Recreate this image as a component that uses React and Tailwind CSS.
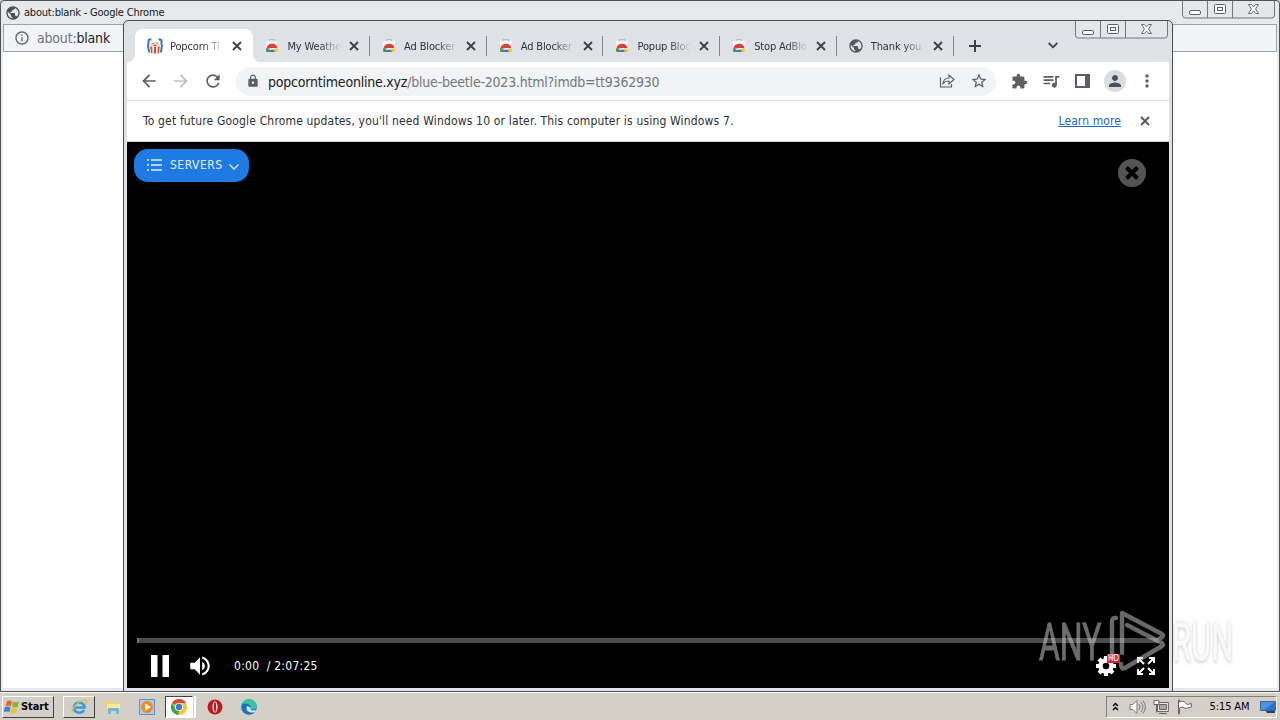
import React from 'react';
import {
  MdArrowBack, MdArrowForward, MdExtension, MdLock, MdMoreVert, MdOutlineInfo,
  MdPerson, MdPublic, MdQueueMusic, MdRefresh, MdStarBorder, MdVolumeUp
} from 'react-icons/md';

const tabs = [
  { title: 'My Weathe', icon: 'store' },
  { title: 'Ad Blocker', icon: 'store' },
  { title: 'Ad Blocker', icon: 'store' },
  { title: 'Popup Bloc', icon: 'store' },
  { title: 'Stop AdBlo', icon: 'store' },
  { title: 'Thank you', icon: 'globe' }
];

function StoreIcon() {
  return (
    <svg className="w-4 h-4 shrink-0" viewBox="0 0 16 16">
      <path d="M5.500 3V1.500h5V3" fill="none" stroke="#b4bec6" strokeWidth="1.200" />
      <path d="M2 3h12v11H2z" fill="#f3f4f5" />
      <path d="M2.500 11a5.600 5.600 0 0 1 11-1H8z" fill="#d9413b" />
      <path d="M2.600 9.800A6 6 0 0 0 2.300 14H7l-1-2z" fill="#3d9d57" />
      <path d="M10 10.500h3.800a6 6 0 0 1-.2 3.500H9z" fill="#f5c62d" />
      <path d="M5.500 14a2.600 2.600 0 0 1 5.200 0z" fill="#3f73d8" />
    </svg>
  );
}

function PopcornIcon() {
  return (
    <svg className="w-4 h-4 shrink-0" viewBox="0 0 16 16">
      <path d="M4.500 1.500H2.800q-1.300 0-1.300 2v2Q1.500 7 1 8q.5 1 .5 3 0 2.500 1.500 3M11.500 1.500h1.700q1.300 0 1.300 2v2q0 1.500.5 2.500-.5 1-.5 3 0 2.500-1.500 3" fill="none" stroke="#2f79bd" strokeWidth="2" />
      <path d="M3 7h10l-1 8.500H4z" fill="#fff" />
      <path d="M3.200 8.500h1.900l.5 7H4.200zM7 9h2v6.500H7zM10.900 8.500h1.900l-1 7h-1.400z" fill="#e5483c" />
      <path d="M3.500 7.700 4 4l2 1 2-1 2 1 2-2 .5 4.700L8 9z" fill="#f6d3b5" />
      <path d="M5.500 5.500h1.200M9.500 5h1.200M6.500 7.500h3" stroke="#c54535" strokeWidth="1" />
    </svg>
  );
}

function CloseIcon({ className }) {
  return (
    <svg className={className} width="10" height="10" viewBox="0 0 10 10" stroke="currentColor" strokeWidth="1.800">
      <path d="m1 1 8 8M9 1 1 9" />
    </svg>
  );
}

function WindowButtons({ className }) {
  return (
    <svg className={className} width="94" height="18" viewBox="0 0 94 18" fill="none">
      <path d="M.5 0v14q0 3 3 3h86q3 0 3-3V0M25.500 0v17M50.500 0v17" fill="#e4e7ea" stroke="#73777e" />
      <rect x="7.500" y="9.500" width="11" height="4" rx="1.500" fill="#fff" stroke="#5b6069" />
      <rect x="32.500" y="3.500" width="11" height="9" rx="1" fill="#fff" stroke="#5b6069" />
      <rect x="35.500" y="6.500" width="5" height="3" stroke="#5b6069" />
      <path d="M66.500 3.500h3l2 2.500 2-2.500h3L73.500 8l3 4.500h-3l-2-2.500-2 2.500h-3l3-4.500z" fill="#fff" stroke="#666b73" />
    </svg>
  );
}

function TabTitle({ children }) {
  return (
    <span className="ml-[7px] pt-[3px] w-[56px] shrink-0 whitespace-nowrap text-[11px] tracking-[-0.15px] text-[#303338] [mask-image:linear-gradient(to_right,black_58%,transparent_97%)]">{children}</span>
  );
}

function Tab({ title, icon }) {
  return (
    <div className="flex items-center w-[116.7px] h-[33px] pl-[12px]">
      {icon === 'store' ? <StoreIcon /> : <MdPublic className="w-4 h-4 shrink-0 text-[#55595e]" />}
      <TabTitle>{title}</TabTitle>
      <CloseIcon className="ml-[6px] shrink-0 text-[#3c4043]" />
      <span className="ml-auto -mr-px w-px h-5 shrink-0 bg-[#80848a]" />
    </div>
  );
}

function BackWindow() {
  return (
    <div className="absolute inset-0 flex flex-col border border-[#505256] rounded-t-[4px] bg-[#e7eaed] px-[2px] pb-[3px]">
      <div className="flex items-center h-[23px] pl-[2px]">
        <MdPublic className="w-4 h-4 text-[#4d5156]" />
        <span className="ml-[3px] pt-px text-[11px] tracking-[-0.2px] text-[#15171a]">about:blank - Google Chrome</span>
      </div>
      <WindowButtons className="absolute right-[3px] top-0" />
      <div className="flex items-center h-[28px] border border-[#9ea1a6] bg-[#f1f3f6] pl-[10px]">
        <MdOutlineInfo className="w-4 h-4 text-[#5f6368]" />
        <span className="ml-[7px] text-[14px] tracking-[-0.19px] text-[#707378]">about:<span className="text-[#202124]">blank</span></span>
      </div>
      <div className="flex-1 bg-white" />
    </div>
  );
}

function Toolbar() {
  return (
    <div className="flex items-center h-[39px] shrink-0 bg-white border-b border-[#d9dbde] text-[#5b5e62]">
      <MdArrowBack className="ml-[12px] w-5 h-5 shrink-0" />
      <MdArrowForward className="ml-[12px] w-5 h-5 shrink-0 text-[#bdbfc2]" />
      <MdRefresh className="ml-[12px] w-5 h-5 shrink-0" />
      <div className="flex items-center ml-[13px] w-[760px] shrink-0 h-[29px] rounded-full bg-[#f1f3f5] pl-[10px]">
        <MdLock className="w-[14px] h-[14px]" />
        <span className="ml-[8px] pt-[2px] text-[14px] tracking-[-0.21px] whitespace-nowrap text-[#74777b]"><span className="text-[#202124]">popcorntimeonline.xyz</span>/blue-beetle-2023.html?imdb=tt9362930</span>
        <svg className="ml-auto w-4 h-4" viewBox="0 0 16 16" fill="none" stroke="currentColor" strokeWidth="1.200">
          <path d="M1.500 4.500v9.500h11v-3M4 10.500C4.500 7 6.500 5 10 5V2l5 4.500-5 4.500V8C7.500 8 5.500 8.700 4 10.500z" />
        </svg>
        <MdStarBorder className="ml-[15px] mr-[8px] w-[18px] h-[18px]" />
      </div>
      <MdExtension className="ml-[15px] w-[17px] h-[17px] shrink-0" />
      <MdQueueMusic className="ml-[13px] w-5 h-5 shrink-0" />
      <svg className="ml-[14px] w-[15px] h-[14px] shrink-0" viewBox="0 0 15 14" fill="none" stroke="currentColor">
        <path d="M1 1h13v12H1z" strokeWidth="2" />
        <path d="M12 1v12" strokeWidth="4" />
      </svg>
      <span className="flex items-center justify-center ml-[14px] w-[22px] h-[22px] shrink-0 rounded-full bg-[#d9dde3]">
        <MdPerson className="w-[18px] h-[18px] text-[#4a505b]" />
      </span>
      <MdMoreVert className="ml-[11px] w-5 h-5 shrink-0" />
    </div>
  );
}

function Player() {
  return (
    <div className="flex flex-col flex-1 bg-black">
      <div className="flex items-start justify-between pl-[7px] pr-[23px] pt-[7px]">
        <button className="flex items-center w-[115px] h-[33px] rounded-[14px] bg-[#1e7be4] pl-[12px] pb-[2px] text-[#e4f0fc]">
          <svg className="w-4 h-4" viewBox="0 0 16 16" stroke="currentColor" strokeWidth="1.500">
            <path d="M5 3h11M5 8h11M5 13h11M1 3h2M1 8h2M1 13h2" />
          </svg>
          <span className="ml-[8px] w-[54px] text-left text-[12px] tracking-[0.5px]">SERVERS</span>
          <svg className="ml-[5px] mt-[5px] w-[10px] h-[6px]" viewBox="0 0 10 6" fill="none" stroke="currentColor" strokeWidth="1.300">
            <path d="m.5.5 4.500 4.500L9.500.5" />
          </svg>
        </button>
        <svg className="mt-[10px] w-7 h-7" viewBox="0 0 28 28">
          <circle cx="14" cy="14" r="14" fill="#545454" />
          <path d="m8.500 8.500 11 11M19.500 8.500l-11 11" stroke="#000" strokeWidth="4" />
        </svg>
      </div>
      <div className="mt-auto ml-[10px] mr-[10px] h-[5px] bg-[#4c4c4c] border-l-2 border-[#6d708a]" />
      <div className="flex items-center h-[45px] pl-[24px] pr-[14px] text-white">
        <svg className="w-[18px] h-[22px]" viewBox="0 0 18 22" fill="currentColor">
          <path d="M0 0h6.500v22H0zM11.500 0H18v22h-6.500z" />
        </svg>
        <MdVolumeUp className="ml-[18px] w-[26px] h-[26px]" />
        <span className="ml-[21px] text-[12px] tracking-[0.26px] whitespace-pre">0:00  / 2:07:25</span>
        <span className="relative ml-auto w-[24px] h-[22px]">
          <svg className="w-[22px] h-[22px]" viewBox="0 0 22 22">
            <path d="M11 1v20M1 11h20M4 4l14 14M18 4 4 18" stroke="#fff" strokeWidth="4.200" />
            <circle cx="11" cy="11" r="5.500" fill="none" stroke="#fff" strokeWidth="4.500" />
            <circle cx="11" cy="11" r="3.300" fill="#000" />
          </svg>
          <span className="absolute left-[12px] -top-px w-[13px] h-[9px] bg-[#e31d36] text-center text-[8px] leading-[9px]">HD</span>
        </span>
        <svg className="ml-[18px] w-[18px] h-[18px]" viewBox="0 0 18 18" fill="none" stroke="currentColor" strokeWidth="2">
          <path d="M6 1H1v5M1 1l6 6M12 1h5v5M17 1l-6 6M6 17H1v-5M1 17l6-6M12 17h5v-5M17 17l-6-6" />
        </svg>
      </div>
    </div>
  );
}

function FrontWindow() {
  return (
    <div className="absolute left-[123px] top-[20px] w-[1050px] h-[672px] flex flex-col border border-[#4b4d51] rounded-t-[5px] bg-[#dee1e6] pl-[3px] pr-[3px] pb-[3px]">
      <div className="flex h-[41px] shrink-0 items-end pl-[8px]">
        <div className="relative flex items-center w-[118px] h-[33px] shrink-0 rounded-t-[8px] bg-white pl-[12px]">
          <span className="absolute -left-2 bottom-0 w-2 h-2 bg-[radial-gradient(circle_at_0_0,transparent_8px,white_8px)]" />
          <span className="absolute -right-2 bottom-0 w-2 h-2 bg-[radial-gradient(circle_at_8px_0,transparent_8px,white_8px)]" />
          <PopcornIcon />
          <TabTitle>Popcorn Ti</TabTitle>
          <CloseIcon className="ml-[6px] shrink-0 text-[#3c4043]" />
        </div>
        <div className="flex -ml-[0.6px]">
          {tabs.map((tab, i) => <Tab key={i} {...tab} />)}
        </div>
        <div className="flex items-center h-[33px] text-[#3c4043]">
          <svg className="ml-[16px] w-3 h-3" viewBox="0 0 12 12" stroke="currentColor" strokeWidth="2">
            <path d="M6 0v12M0 6h12" />
          </svg>
          <svg className="ml-[67px] w-[10px] h-[7px]" viewBox="0 0 10 7" fill="none" stroke="currentColor" strokeWidth="1.800">
            <path d="m.7 1 4.300 4.300L9.300 1" />
          </svg>
        </div>
      </div>
      <WindowButtons className="absolute right-[3px] top-0" />
      <Toolbar />
      <div className="flex items-center h-[41px] shrink-0 bg-white pl-[16px] pr-[19px] border-b border-[#d0d2d5] text-[12px] text-[#2e3033]">
        <span className="tracking-[0.165px] whitespace-nowrap">To get future Google Chrome updates, you'll need Windows 10 or later. This computer is using Windows 7.</span>
        <span className="ml-auto tracking-[0.1px] underline text-[#2567bd]">Learn more</span>
        <CloseIcon className="ml-[19px] text-[#53565a]" />
      </div>
      <Player />
    </div>
  );
}

function Watermark() {
  return (
    <svg className="absolute left-[1034px] top-[605px] w-[204px] h-[70px] opacity-50" viewBox="1034 605 204 70" fill="none" fontFamily="Roboto" fontSize="52">
      <text transform="translate(1039 660) scale(.6 1)" textLength="104" lengthAdjust="spacingAndGlyphs" fill="#d8d8d8" stroke="#d8d8d8" strokeWidth="1">ANY</text>
      <g stroke="#d0d0d0" strokeWidth="4.400" strokeLinejoin="round" strokeLinecap="round">
        <path d="M1112 658v-36q0-5 4-4" />
        <path d="M1122 653v-40l40 21q3 2-3 5M1127 625l35 18q2 2 0 3l-37 22q-4 2-4-4" />
      </g>
      <text transform="translate(1172 660) scale(.6 1)" textLength="102" lengthAdjust="spacingAndGlyphs" fill="#f4f4f4" stroke="#f4f4f4" strokeWidth="1" className="[filter:drop-shadow(0_1px_2px_#888)]">RUN</text>
    </svg>
  );
}

function Taskbar() {
  return (
    <div className="flex items-center h-[28px] bg-[#d4d0c8] border-t border-white text-[11px] text-black">
      <div className="flex items-center ml-[2px] w-[52px] h-[22px] border border-t-white border-l-white border-b-[#404040] border-r-[#404040] pl-px">
        <svg className="w-[16px] h-[16px] shrink-0" viewBox="0 0 16 16">
          <path d="M3 2q2-1 5 0L7 7Q4 6 1.500 7z" fill="#e8632e" />
          <path d="M9 2.500q3 1.500 6 0L13.500 8q-3 1-5.500-.5z" fill="#7dba3b" />
          <path d="M1 8q3-1 5.500.2L5.500 13Q3 12-.3 13z" fill="#3e85d6" />
          <path d="M7.600 8.700q2.700 1.300 5.700.3L12 14q-3 1-5.500-.5z" fill="#f5bd28" />
        </svg>
        <span className="ml-px pt-px font-bold tracking-[-0.1px]">Start</span>
      </div>
      <div className="flex items-center justify-center ml-[9px] w-[32px] h-[22px] border border-t-white border-l-white border-b-[#404040] border-r-[#404040]">
        <svg className="w-[18px] h-[18px]" viewBox="0 0 18 18" fill="none">
          <path d="M4 9.500h10.500C14.500 3 4 3 4 9.500c0 6 8 6.500 10 2.500" stroke="#2f9fdf" strokeWidth="2.600" />
          <path d="M2 15C1 10 11 1 16 2c1 .3 1 2 0 4" stroke="#e9bd3f" strokeWidth="1.400" />
        </svg>
      </div>
      <svg className="ml-[10px] w-4 h-4" viewBox="0 0 16 16">
        <path d="M1 2h6l1 2h6v9H1z" fill="#efd36b" />
        <path d="M2 5h13v5H2z" fill="#fae99c" />
        <path d="M3 9h11v6h-3v-3H6v3H3z" fill="#74b7dc" />
      </svg>
      <svg className="ml-[18px] w-4 h-4" viewBox="0 0 16 16">
        <path d="M.5.5h15v15H.5z" fill="#a9cdef" stroke="#5992cd" />
        <circle cx="8" cy="8" r="6" fill="#f28b20" />
        <path d="m6 4.500 6 3.500-6 3.500z" fill="#fff" />
      </svg>
      <div className="flex items-center justify-center ml-[10px] w-[28px] h-[22px] border border-t-[#404040] border-l-[#404040] border-b-white border-r-white bg-white">
        <svg className="w-4 h-4" viewBox="0 0 16 16">
          <circle cx="8" cy="8" r="8" fill="#f4c531" />
          <path d="M8 8 1.100 4A8 8 0 0 1 15 4H8z" fill="#e24435" />
          <path d="M1.100 4 5 10.500 8 12l-1 4A8 8 0 0 1 1.100 4z" fill="#35a255" />
          <circle cx="8" cy="8" r="4" fill="#fff" />
          <circle cx="8" cy="8" r="3.200" fill="#3b78e0" />
        </svg>
      </div>
      <span className="w-[2px] h-[22px] ml-px bg-white" />
      <svg className="ml-[11px] w-4 h-4" viewBox="0 0 16 16">
        <circle cx="8" cy="8" r="7.500" fill="#bd1a20" />
        <ellipse cx="8" cy="8" rx="2.600" ry="5.800" fill="#e9dada" />
        <ellipse cx="8" cy="8" rx="1" ry="5" fill="#a91c21" />
      </svg>
      <svg className="ml-[18px] w-4 h-4" viewBox="0 0 16 16">
        <circle cx="8" cy="8" r="7.800" fill="#1673c5" />
        <path d="M1 5c3-7 14-6 14.800 2.500.2 3-5 4-6.300 2C11 7 7 3 1 5z" fill="#35c4a0" />
        <path d="M6 7c-2 4 2 8 8 6l1-2c-4 1-6 0-5.500-2.500z" fill="#d5e5eb" />
      </svg>
      <div className="flex items-center ml-auto mr-[3px] w-[171px] h-[22px] border border-t-[#808080] border-l-[#808080] border-b-white border-r-white pl-[5px]">
        <svg className="w-[7px] h-[9px]" viewBox="0 0 7 9" fill="none" stroke="#000" strokeWidth="1.400">
          <path d="M1 4l2.500-2.500L6 4M1 8l2.500-2.500L6 8" />
        </svg>
        <svg className="ml-[10px] w-[17px] h-4" viewBox="0 0 17 16" fill="none" stroke="#777">
          <path d="M1 5.500h3l4-4v13l-4-4H1z" fill="#fff" />
          <path d="M10 5q2 3 0 6M12 3q4 5 0 10M14 1.500q5 6.500 0 13" />
        </svg>
        <svg className="ml-[7px] w-4 h-4" viewBox="0 0 16 16" stroke="#64615d">
          <path d="M4.500 3.500h11v9h-11z" fill="#eee" />
          <path d="M6.500 5.500h7v5h-7z" fill="#aaa" />
          <path d="M1 1.500h5v4H1zM3.500 5v8.500M6 14.500h8" fill="#fff" />
        </svg>
        <svg className="ml-[8px] w-4 h-4" viewBox="0 0 16 16" fill="#fff" stroke="#64615d">
          <path d="M1.500 1v14h1V9q3-2 5 0 2 1 3 0l4-1V4.500l-4 1Q9 4.500 7.500 3 5 1 2.500 3V1z" />
        </svg>
        <span className="ml-[17px] pt-[2px] w-[42px] whitespace-nowrap tracking-[-0.1px]">5:15 AM</span>
        <svg className="ml-[9px] w-4 h-[14px]" viewBox="0 0 16 14">
          <path d="M.5 1.500h15v9H.5z" fill="#2b72cf" stroke="#3c5f96" />
          <path d="M1 2h14L4 10H1z" fill="#4b93e2" />
          <path d="M6 11h9v2H7z" fill="#253c63" />
        </svg>
      </div>
    </div>
  );
}

export default function App() {
  return (
    <div className="relative flex flex-col w-[1280px] h-[720px] overflow-hidden bg-[#d4d0c8] font-['DejaVu_Sans_Condensed','Noto_Sans',sans-serif]">
      <div className="relative h-[692px] shrink-0">
        <BackWindow />
        <FrontWindow />
      </div>
      <Taskbar />
      <Watermark />
    </div>
  );
}
